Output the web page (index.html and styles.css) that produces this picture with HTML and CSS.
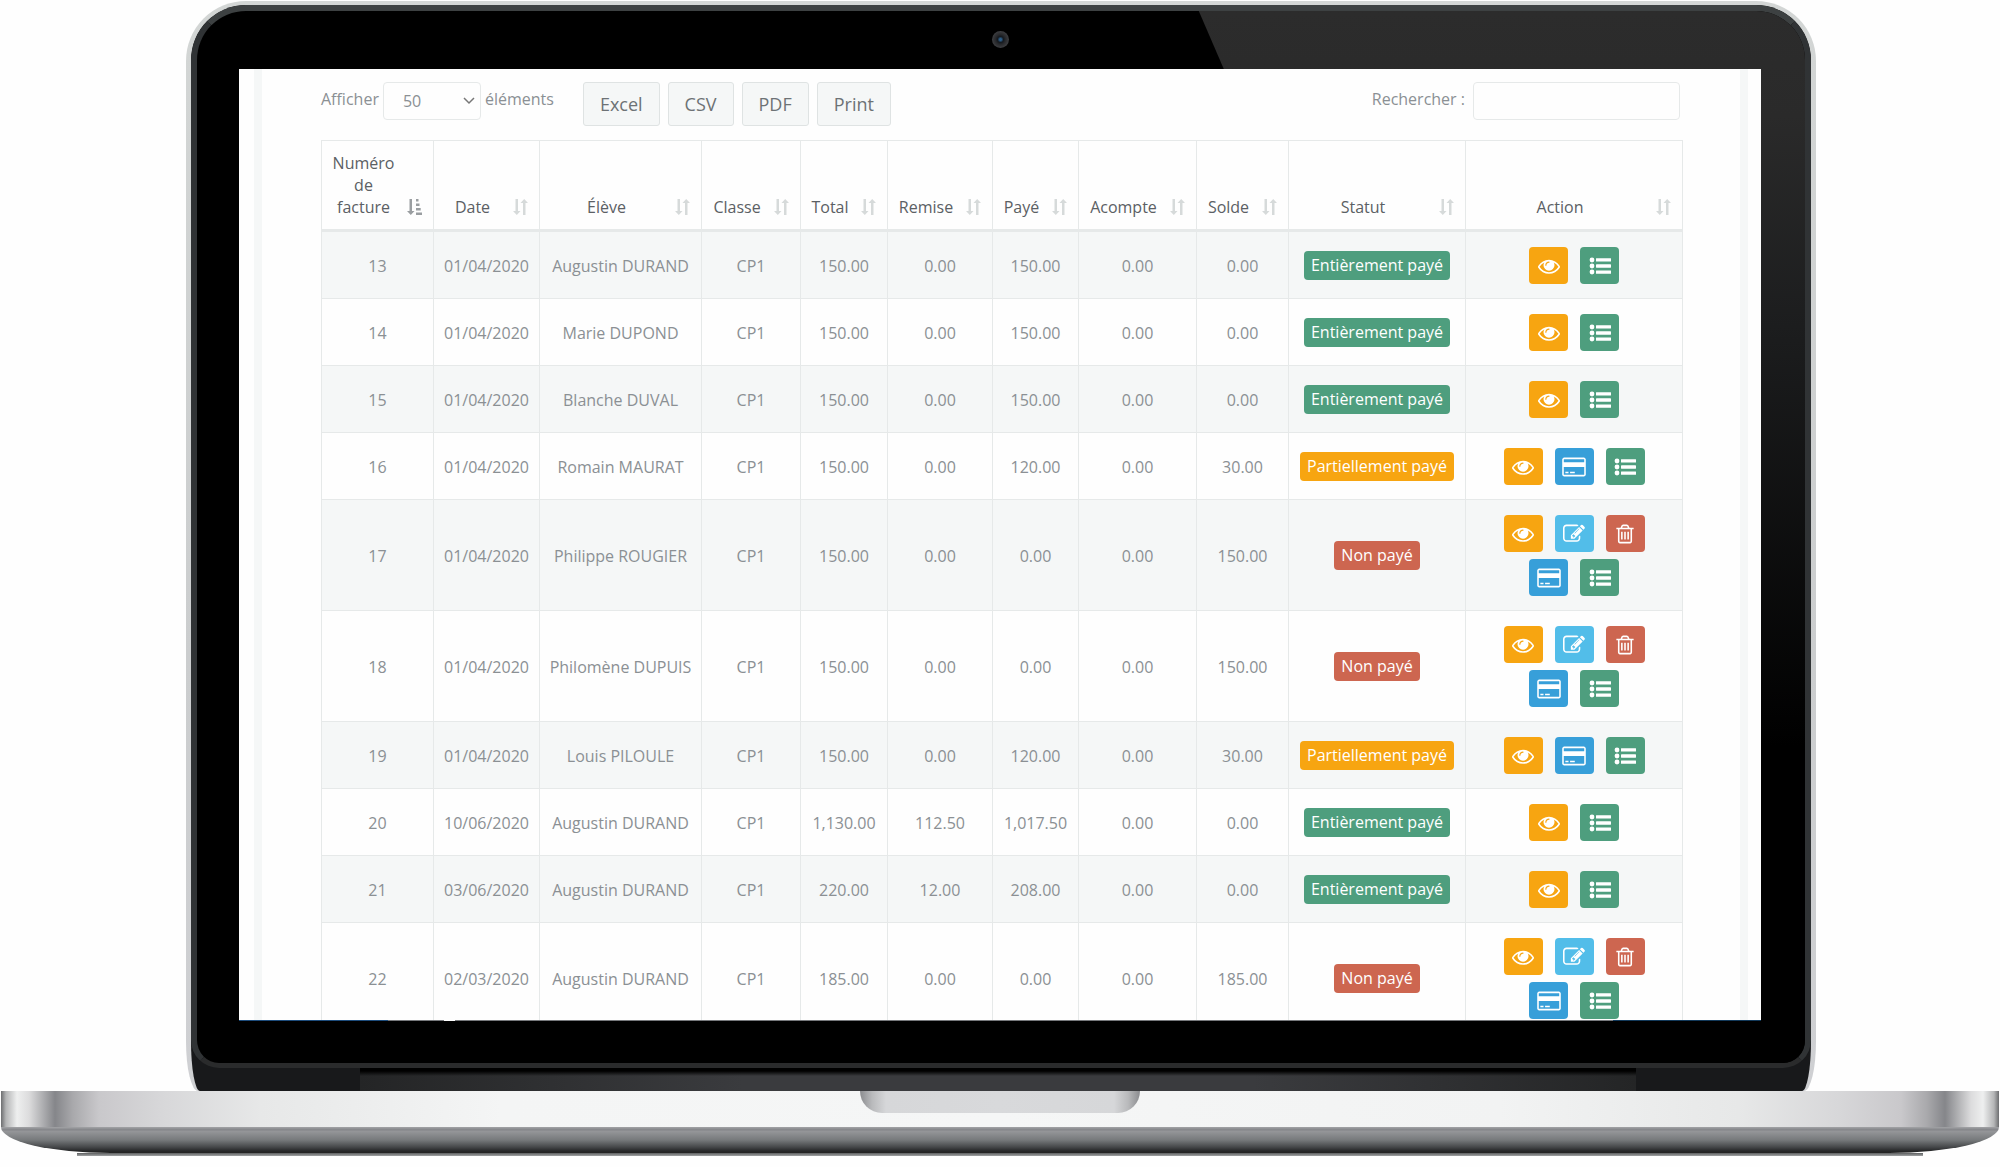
FILE: index.html
```html
<!DOCTYPE html>
<html lang="fr">
<head>
<meta charset="utf-8">
<meta name="viewport" content="width=device-width, initial-scale=1">
<title>Factures</title>
<link rel="stylesheet" href="styles.css">
</head>
<body>
<svg class="sprite" aria-hidden="true">
  <symbol id="eye" viewBox="0 0 1792 1792"><path d="M1664 960q-152-236-381-353 61 104 61 225 0 185-131.500 316.500t-316.500 131.500-316.500-131.500-131.500-316.500q0-121 61-225-229 117-381 353 133 205 333.500 326.500t434.500 121.500 434.500-121.500 333.500-326.500zm-720-384q0-20-14-34t-34-14q-125 0-214.500 89.500t-89.500 214.500q0 20 14 34t34 14 34-14 14-34q0-86 61-147t147-61q20 0 34-14t14-34zm848 384q0 34-20 69-140 230-376.500 368.500t-499.500 138.500-499.500-139-376.500-368q-20-35-20-69t20-69q140-229 376.500-368t499.500-139 499.500 139 376.500 368q20 35 20 69z"/></symbol>
  <symbol id="trash" viewBox="0 0 1792 1792"><path d="M704 736v576q0 14-9 23t-23 9h-64q-14 0-23-9t-9-23v-576q0-14 9-23t23-9h64q14 0 23 9t9 23zm256 0v576q0 14-9 23t-23 9h-64q-14 0-23-9t-9-23v-576q0-14 9-23t23-9h64q14 0 23 9t9 23zm256 0v576q0 14-9 23t-23 9h-64q-14 0-23-9t-9-23v-576q0-14 9-23t23-9h64q14 0 23 9t9 23zm128 724v-948h-896v948q0 22 7 40.500t14.500 27 10.500 8.500h832q3 0 10.500-8.500t14.500-27 7-40.500zm-672-1076h448l-48-117q-7-9-17-11h-317q-10 2-17 11zm928 32v64q0 14-9 23t-23 9h-96v948q0 83-47 143.500t-113 60.500h-832q-66 0-113-58.500t-47-141.500v-952h-96q-14 0-23-9t-9-23v-64q0-14 9-23t23-9h309l70-167q15-37 54-63t79-26h320q40 0 79 26t54 63l70 167h309q14 0 23 9t9 23z"/></symbol>
  <symbol id="edit" viewBox="0 0 1792 1792"><path d="M888 1184l116-116-152-152-116 116v56h96v96h56zm440-720q-16-16-33 1l-350 350q-17 17-1 33t33-1l350-350q17-17 1-33zm80 594v190q0 119-84.500 203.500t-203.500 84.500h-832q-119 0-203.500-84.500t-84.500-203.500v-832q0-119 84.500-203.500t203.500-84.500h832q63 0 117 25 15 7 18 23 3 17-9 29l-49 49q-14 14-32 8-23-6-45-6h-832q-66 0-113 47t-47 113v832q0 66 47 113t113 47h832q66 0 113-47t47-113v-126q0-13 9-22l64-64q15-15 35-7t20 29zm-96-738l288 288-672 672h-288v-288zm444 132l-92 92-288-288 92-92q28-28 68-28t68 28l152 152q28 28 28 68t-28 68z"/></symbol>
  <symbol id="card" viewBox="0 0 1920 1792"><path d="M1760 128q66 0 113 47t47 113v1216q0 66-47 113t-113 47h-1600q-66 0-113-47t-47-113v-1216q0-66 47-113t113-47h1600zm-1600 128q-13 0-22.500 9.500t-9.500 22.500v224h1664v-224q0-13-9.500-22.500t-22.500-9.500h-1600zm1600 1280q13 0 22.500-9.500t9.500-22.500v-608h-1664v608q0 13 9.500 22.500t22.500 9.500h1600zm-1504-128v-128h256v128h-256zm384 0v-128h384v128h-384z"/></symbol>
  <symbol id="list" viewBox="0 0 22 22"><circle cx="3" cy="5" r="2.400"/><circle cx="3" cy="11" r="2.400"/><circle cx="3" cy="17" r="2.400"/><rect x="7" y="3.200" width="15" height="3.400" rx=".4"/><rect x="7" y="9.300" width="15" height="3.400" rx=".4"/><rect x="7" y="15.400" width="15" height="3.400" rx=".4"/></symbol>
  <symbol id="sort" viewBox="0 0 15 16"><path d="M2.500 0h2.500v12h2.500L3.800 16 0 12h2.500zM10 16h2.500V4h2.500L11.200 0 7.500 4H10z"/></symbol>
  <symbol id="sorted" viewBox="0 0 15 16"><path d="M2.500 0h2.500v12h2.500L3.800 16 0 12h2.500zM9 0h2.500v2.500H9zM9 4.500h3.500V7H9zM9 9h4.700v2.500H9zM9 13.500h6V16H9z"/></symbol>
</svg>

<div class="laptop">
  <div class="lid">
    <div class="shell">
      <div class="bezel">
        <span class="camera"></span>
        <main class="screen">
          <div class="panel">
            <div class="toolbar">
              <div class="length">
                <label for="length">Afficher</label>
                <span class="select">
                  <select id="length"><option>10</option><option>25</option><option selected>50</option><option>100</option></select>
                  <svg class="chevron" viewBox="0 0 12 8" aria-hidden="true"><path d="M1 1l5 5 5-5"/></svg>
                </span>
                <span class="text">éléments</span>
              </div>
              <div class="exports">
                <button type="button">Excel</button>
                <button type="button">CSV</button>
                <button type="button">PDF</button>
                <button type="button">Print</button>
              </div>
              <div class="search">
                <label for="search">Rechercher :</label>
                <input id="search" type="search">
              </div>
            </div>
            <table class="invoices">
              <colgroup><col class="c-num"><col class="c-date"><col class="c-name"><col class="c-class"><col class="c-total"><col class="c-disc"><col class="c-paid"><col class="c-dep"><col class="c-bal"><col class="c-status"><col></colgroup>
              <thead>
                <tr>
                  <th><div class="head"><span>Numéro de facture</span><svg class="on"><use href="#sorted"/></svg></div></th>
                  <th><div class="head"><span>Date</span><svg><use href="#sort"/></svg></div></th>
                  <th><div class="head"><span>Élève</span><svg><use href="#sort"/></svg></div></th>
                  <th><div class="head"><span>Classe</span><svg><use href="#sort"/></svg></div></th>
                  <th><div class="head"><span>Total</span><svg><use href="#sort"/></svg></div></th>
                  <th><div class="head"><span>Remise</span><svg><use href="#sort"/></svg></div></th>
                  <th><div class="head"><span>Payé</span><svg><use href="#sort"/></svg></div></th>
                  <th><div class="head"><span>Acompte</span><svg><use href="#sort"/></svg></div></th>
                  <th><div class="head"><span>Solde</span><svg><use href="#sort"/></svg></div></th>
                  <th><div class="head"><span>Statut</span><svg><use href="#sort"/></svg></div></th>
                  <th><div class="head"><span>Action</span><svg><use href="#sort"/></svg></div></th>
                </tr>
              </thead>
              <tbody>
                <tr><td>13</td><td>01/04/2020</td><td>Augustin DURAND</td><td>CP1</td><td>150.00</td><td>0.00</td><td>150.00</td><td>0.00</td><td>0.00</td><td><span class="badge green">Entièrement payé</span></td><td><div class="actions"><button class="orange" aria-label="Voir"><svg><use href="#eye"/></svg></button><button class="green" aria-label="Paiements"><svg><use href="#list"/></svg></button></div></td></tr>
                <tr><td>14</td><td>01/04/2020</td><td>Marie DUPOND</td><td>CP1</td><td>150.00</td><td>0.00</td><td>150.00</td><td>0.00</td><td>0.00</td><td><span class="badge green">Entièrement payé</span></td><td><div class="actions"><button class="orange" aria-label="Voir"><svg><use href="#eye"/></svg></button><button class="green" aria-label="Paiements"><svg><use href="#list"/></svg></button></div></td></tr>
                <tr><td>15</td><td>01/04/2020</td><td>Blanche DUVAL</td><td>CP1</td><td>150.00</td><td>0.00</td><td>150.00</td><td>0.00</td><td>0.00</td><td><span class="badge green">Entièrement payé</span></td><td><div class="actions"><button class="orange" aria-label="Voir"><svg><use href="#eye"/></svg></button><button class="green" aria-label="Paiements"><svg><use href="#list"/></svg></button></div></td></tr>
                <tr><td>16</td><td>01/04/2020</td><td>Romain MAURAT</td><td>CP1</td><td>150.00</td><td>0.00</td><td>120.00</td><td>0.00</td><td>30.00</td><td><span class="badge orange">Partiellement payé</span></td><td><div class="actions"><button class="orange" aria-label="Voir"><svg><use href="#eye"/></svg></button><button class="blue" aria-label="Payer"><svg class="wide"><use href="#card"/></svg></button><button class="green" aria-label="Paiements"><svg><use href="#list"/></svg></button></div></td></tr>
                <tr><td>17</td><td>01/04/2020</td><td>Philippe ROUGIER</td><td>CP1</td><td>150.00</td><td>0.00</td><td>0.00</td><td>0.00</td><td>150.00</td><td><span class="badge red">Non payé</span></td><td><div class="actions"><button class="orange" aria-label="Voir"><svg><use href="#eye"/></svg></button><button class="sky" aria-label="Modifier"><svg><use href="#edit"/></svg></button><button class="red" aria-label="Supprimer"><svg><use href="#trash"/></svg></button><button class="blue" aria-label="Payer"><svg class="wide"><use href="#card"/></svg></button><button class="green" aria-label="Paiements"><svg><use href="#list"/></svg></button></div></td></tr>
                <tr><td>18</td><td>01/04/2020</td><td>Philomène DUPUIS</td><td>CP1</td><td>150.00</td><td>0.00</td><td>0.00</td><td>0.00</td><td>150.00</td><td><span class="badge red">Non payé</span></td><td><div class="actions"><button class="orange" aria-label="Voir"><svg><use href="#eye"/></svg></button><button class="sky" aria-label="Modifier"><svg><use href="#edit"/></svg></button><button class="red" aria-label="Supprimer"><svg><use href="#trash"/></svg></button><button class="blue" aria-label="Payer"><svg class="wide"><use href="#card"/></svg></button><button class="green" aria-label="Paiements"><svg><use href="#list"/></svg></button></div></td></tr>
                <tr><td>19</td><td>01/04/2020</td><td>Louis PILOULE</td><td>CP1</td><td>150.00</td><td>0.00</td><td>120.00</td><td>0.00</td><td>30.00</td><td><span class="badge orange">Partiellement payé</span></td><td><div class="actions"><button class="orange" aria-label="Voir"><svg><use href="#eye"/></svg></button><button class="blue" aria-label="Payer"><svg class="wide"><use href="#card"/></svg></button><button class="green" aria-label="Paiements"><svg><use href="#list"/></svg></button></div></td></tr>
                <tr><td>20</td><td>10/06/2020</td><td>Augustin DURAND</td><td>CP1</td><td>1,130.00</td><td>112.50</td><td>1,017.50</td><td>0.00</td><td>0.00</td><td><span class="badge green">Entièrement payé</span></td><td><div class="actions"><button class="orange" aria-label="Voir"><svg><use href="#eye"/></svg></button><button class="green" aria-label="Paiements"><svg><use href="#list"/></svg></button></div></td></tr>
                <tr><td>21</td><td>03/06/2020</td><td>Augustin DURAND</td><td>CP1</td><td>220.00</td><td>12.00</td><td>208.00</td><td>0.00</td><td>0.00</td><td><span class="badge green">Entièrement payé</span></td><td><div class="actions"><button class="orange" aria-label="Voir"><svg><use href="#eye"/></svg></button><button class="green" aria-label="Paiements"><svg><use href="#list"/></svg></button></div></td></tr>
                <tr><td>22</td><td>02/03/2020</td><td>Augustin DURAND</td><td>CP1</td><td>185.00</td><td>0.00</td><td>0.00</td><td>0.00</td><td>185.00</td><td><span class="badge red">Non payé</span></td><td><div class="actions"><button class="orange" aria-label="Voir"><svg><use href="#eye"/></svg></button><button class="sky" aria-label="Modifier"><svg><use href="#edit"/></svg></button><button class="red" aria-label="Supprimer"><svg><use href="#trash"/></svg></button><button class="blue" aria-label="Payer"><svg class="wide"><use href="#card"/></svg></button><button class="green" aria-label="Paiements"><svg><use href="#list"/></svg></button></div></td></tr>
              </tbody>
            </table>
          </div>
        </main>
      </div>
      <div class="hinge"></div>
    </div>
  </div>
  <div class="deck"><div class="notch"></div></div>
  <div class="underside"></div>
  <div class="shadow"></div>
</div>
</body>
</html>
```
FILE: styles.css
```css
* { box-sizing: border-box; }

body {
  margin: 0;
  background: #fefefe;
  color: #8b9094;
  font: 16px/22px "Open Sans", "Noto Sans", sans-serif;
}

button, input, select { font: inherit; color: inherit; }

.sprite { position: absolute; width: 0; height: 0; }

.laptop { padding: 1px 1px 0; }

/* Lid */
.lid {
  margin: 0 183px 0 185px;
  padding: 4px 5px 0;
  border-radius: 60px 60px 12px 12px / 60px 60px 50px 50px;
  background: linear-gradient(#d3d6d5, #cbcdce 60%, #cfd0d3);
}

.shell {
  overflow: hidden;
  border-radius: 55px 55px 9px 9px / 55px 55px 50px 50px;
  background: #18191b;
}

.bezel {
  position: relative;
  padding: 58px 44px 42px 42px;
  border: 6px solid #303335;
  border-top-color: #3d4142;
  border-bottom: 5px solid #2a2b2c;
  border-radius: 55px 55px 28px 28px;
  background: #000;
}

.bezel::before {
  content: "";
  position: absolute;
  inset: 0;
  border-radius: 49px 49px 22px 22px;
  background: linear-gradient(#2c2c2c, #2a2a2a 10%, #1c1d1e 30%, #000 70%);
  clip-path: polygon(62.3% 0, 100% 0, 100% 100%, 90.5% 100%);
}

.camera {
  position: absolute;
  top: 20px;
  left: calc(50% - 9px);
  width: 17px;
  height: 17px;
  border-radius: 50%;
  background: radial-gradient(circle, #2a5c88 0 1px, #15191e 3px, #28292c 5px, #3a3b3e 8px);
}

.screen {
  position: relative;
  aspect-ratio: 1522 / 952;
  overflow: hidden;
  background: #fefefe;
}

.screen::after {
  content: "";
  position: absolute;
  inset: auto 0 0;
  height: 1px;
  background: linear-gradient(90deg, #1d4c7c 0 149px, #77797c 149px 205px, #fff 205px 216px, #77797c 216px calc(100% - 148px), #12395a calc(100% - 148px));
}

.hinge {
  height: 23px;
  margin: 0 175px 0 169px;
  background:
    linear-gradient(#000 0 3px, transparent 8px),
    linear-gradient(90deg, #242526, #3a3b3e 30%, #3a3b3e 70%, #242526);
}

/* Base */
.deck {
  height: 36px;
  background: linear-gradient(90deg,
    #6d6e70 0, #b4b5b6 5px, #eeefef 16px, #dcdcdd 28px, #85868a 54px, #a9a9ac 72px, #c9c8cb 98px, #d7d7d9 160px, #e7e8e8 260px, #f4f5f5 500px,
    #f5f6f6 50%,
    #f2f3f3 calc(100% - 500px), #e7e8e8 calc(100% - 260px), #d7d7d9 calc(100% - 160px), #c9c8cb calc(100% - 98px), #a9a9ac calc(100% - 72px), #85868a calc(100% - 54px), #dcdcdd calc(100% - 28px), #eeefef calc(100% - 16px), #b4b5b6 calc(100% - 5px), #6d6e70 100%);
}

.notch {
  width: 280px;
  height: 22px;
  margin: 0 auto;
  border-radius: 0 0 22px 22px;
  background: linear-gradient(90deg, #8b8c8f, #b9babc 12px, #d6d7d9 26px, #d8d9db 50%, #d6d7d9 calc(100% - 26px), #b9babc calc(100% - 12px), #8b8c8f);
}

.underside {
  height: 26px;
  border-radius: 0 0 110px 110px / 0 0 26px 26px;
  background: linear-gradient(#a2a3a6, #828387 3px, #96979a 4px, #76797b 13px, #46484a 20px, #262728 24px, #222 26px);
}

.shadow {
  height: 3px;
  margin: 0 76px;
  background: linear-gradient(#5d5f60, #a0a2a3);
}

/* Application */
.panel {
  min-height: 100%;
  margin: 0 13px 0 15px;
  padding: 13px 57px 0 59px;
  border: solid #f5f7f7;
  border-width: 0 8px;
}

.toolbar { display: flex; align-items: flex-start; margin-bottom: 14px; }

.length, .search { display: flex; gap: 4px; line-height: 34px; }

.select { position: relative; }

.select select {
  display: block;
  width: 98px;
  height: 38px;
  padding: 0 19px;
  border: 1px solid #e6e9e9;
  border-radius: 4px;
  background: #fefefe;
  appearance: none;
}

.chevron {
  position: absolute;
  top: 15px;
  right: 6px;
  width: 12px;
  height: 8px;
  fill: none;
  stroke: #777;
  stroke-width: 1.5;
}

.exports { display: flex; gap: 8px; margin-left: 29px; }

.exports button {
  height: 44px;
  padding: 0 16px;
  border: 1px solid #dfe3e3;
  border-radius: 3px;
  background: #f5f7f7;
  color: #6d7275;
  font-size: 18px;
}

.search { gap: 8px; margin: 0 3px 0 auto; }

.search input {
  width: 207px;
  height: 38px;
  padding: 0 12px;
  border: 1px solid #e6e9e9;
  border-radius: 4px;
  background: #fefefe;
}

.invoices {
  width: 100%;
  table-layout: fixed;
  border-collapse: separate;
  border-spacing: 0;
  border: solid #e6e9e9;
  border-width: 1px 0 0 1px;
  text-align: center;
}

.c-num { width: 112px; }
.c-date { width: 106px; }
.c-name { width: 162px; }
.c-class { width: 99px; }
.c-total { width: 87px; }
.c-disc { width: 105px; }
.c-paid { width: 86px; }
.c-dep { width: 118px; }
.c-bal { width: 92px; }
.c-status { width: 177px; }

th {
  padding: 11px 11px 11px 7px;
  border: solid #e6e9e9;
  border-width: 0 1px 3px 0;
  color: #5b6064;
  font-weight: 400;
  vertical-align: bottom;
}

.head { display: flex; align-items: flex-end; gap: 9px; }
.head span { flex: 1; }
.head svg { flex: none; width: 15px; height: 16px; margin-bottom: 3px; fill: #d6dada; }
.head .on { fill: #9a9ea1; }

td {
  padding: 15px 0 14px;
  border: solid #e6e9e9;
  border-width: 0 1px 1px 0;
  white-space: nowrap;
}

tbody tr:nth-child(odd) { background: #f5f7f7; }

.badge {
  display: inline-block;
  padding: 0 7px;
  border-radius: 4px;
  color: #fff;
  line-height: 29px;
  vertical-align: middle;
}

.actions {
  display: flex;
  flex-wrap: wrap;
  justify-content: center;
  gap: 7px 12px;
  padding: 0 36px;
}

.actions button {
  display: grid;
  place-items: center;
  width: 39px;
  height: 37px;
  padding: 0;
  border: 0;
  border-radius: 4px;
}

.actions svg { width: 22px; height: 22px; fill: #fff; }
.actions .wide { width: 24px; }

.green { background: #4e9e7e; }
.orange { background: #f7a511; }
.red { background: #cd6650; }
.blue { background: #379fd9; }
.sky { background: #52bde9; }
```
